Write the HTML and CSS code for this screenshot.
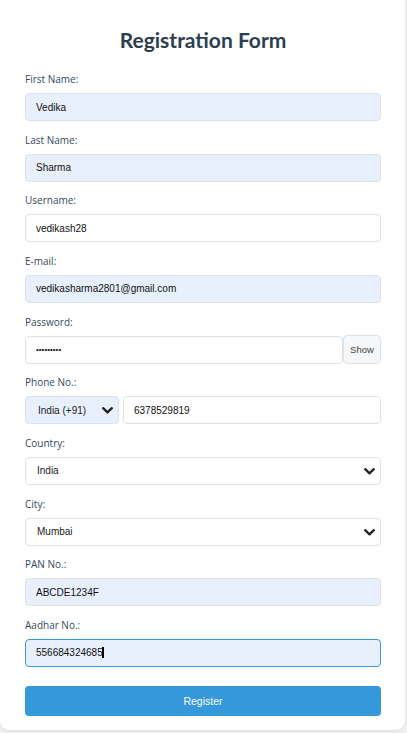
FILE: index.html
```html
<!DOCTYPE html>
<html lang="en">
<head>
<meta charset="utf-8">
<title>Registration Form</title>
<link rel="stylesheet" href="styles.css">
</head>
<body>
<div class="card">
  <h1 class="title">Registration Form</h1>
  <form class="form">
    <div class="group">
      <label class="label">First Name:</label>
      <input class="field filled" type="text" value="Vedika">
    </div>
    <div class="group">
      <label class="label">Last Name:</label>
      <input class="field filled" type="text" value="Sharma">
    </div>
    <div class="group">
      <label class="label">Username:</label>
      <input class="field" type="text" value="vedikash28">
    </div>
    <div class="group">
      <label class="label">E-mail:</label>
      <input class="field filled" type="text" value="vedikasharma2801@gmail.com">
    </div>
    <div class="group">
      <label class="label">Password:</label>
      <div class="row">
        <input class="field pw" type="password" value="123456789">
        <button class="show" type="button">Show</button>
      </div>
    </div>
    <div class="group">
      <label class="label">Phone No.:</label>
      <div class="row phone">
        <div class="select-wrap code">
          <select class="field select filled"><option>India (+91)</option></select>
          <svg class="chev" width="11" height="7" viewBox="0 0 11 7"><path d="M1.2 1.2 L5.5 5.3 L9.8 1.2" fill="none" stroke="#222" stroke-width="2.3" stroke-linecap="round" stroke-linejoin="round"/></svg>
        </div>
        <input class="field num" type="text" value="6378529819">
      </div>
    </div>
    <div class="group">
      <label class="label">Country:</label>
      <div class="select-wrap">
        <select class="field select"><option>India</option></select>
        <svg class="chev" width="11" height="7" viewBox="0 0 11 7"><path d="M1.2 1.2 L5.5 5.3 L9.8 1.2" fill="none" stroke="#222" stroke-width="2.3" stroke-linecap="round" stroke-linejoin="round"/></svg>
      </div>
    </div>
    <div class="group">
      <label class="label">City:</label>
      <div class="select-wrap">
        <select class="field select"><option>Mumbai</option></select>
        <svg class="chev" width="11" height="7" viewBox="0 0 11 7"><path d="M1.2 1.2 L5.5 5.3 L9.8 1.2" fill="none" stroke="#222" stroke-width="2.3" stroke-linecap="round" stroke-linejoin="round"/></svg>
      </div>
    </div>
    <div class="group">
      <label class="label">PAN No.:</label>
      <input class="field filled" type="text" value="ABCDE1234F">
    </div>
    <div class="group">
      <label class="label">Aadhar No.:</label>
      <div class="field filled focused"><span class="val">556684324685</span><span class="caret"></span></div>
    </div>
    <button class="submit" type="button">Register</button>
  </form>
</div>
</body>
</html>
```

FILE: styles.css
```css
html, body {
  margin: 0;
  padding: 0;
}
body {
  background: #f1f1f2;
  width: 407px;
  height: 733px;
  overflow: hidden;
}
.card {
  width: 405px;
  box-sizing: border-box;
  background: #ffffff;
  padding: 25px 24px 14px 25px;
  border-radius: 0 0 9px 9px;
  box-shadow: 0 1px 4px rgba(0, 0, 0, 0.08);
}
.title {
  margin: 0 0 17px 0;
  text-align: center;
  font-family: Lato, "Open Sans", sans-serif;
  font-weight: 700;
  font-size: 21px;
  line-height: 30px;
  color: #2c3e50;
}
.form {
  display: flex;
  flex-direction: column;
}
.group {
  display: flex;
  flex-direction: column;
  margin-bottom: 11.67px;
}
.label {
  display: block;
  font-family: "Open Sans", sans-serif;
  font-size: 10px;
  line-height: 14px;
  color: #34495e;
  margin-bottom: 7px;
}
.field {
  box-sizing: border-box;
  height: 28px;
  width: 100%;
  margin: 0;
  padding: 0 10px;
  border: 1px solid #dde2e7;
  border-radius: 4px;
  background: #ffffff;
  font-family: "Liberation Sans", Arial, sans-serif;
  font-size: 10px;
  color: #111;
  outline: none;
}
.filled {
  background: #e8f0fe;
}
.row {
  display: flex;
  align-items: center;
}
.pw {
  flex: 1;
  width: auto;
  min-width: 0;
  font-size: 8px;
}
.show {
  box-sizing: border-box;
  width: 38px;
  height: 29px;
  margin: -1px 0 0 0;
  padding: 0;
  border: 1px solid #dde2e7;
  border-radius: 4px;
  background: #f6f7f9;
  font-family: "Liberation Sans", Arial, sans-serif;
  font-size: 9.5px;
  color: #444;
}
.phone {
  gap: 4px;
}
.select-wrap {
  position: relative;
  width: 100%;
}
.select-wrap.code {
  width: 94px;
  flex: none;
}
.num {
  flex: 1;
  width: auto;
  min-width: 0;
}
.select {
  appearance: none;
  -webkit-appearance: none;
  padding: 0 10px 0 11px;
  color: #222;
}
.code .select {
  padding-left: 12px;
}
.chev {
  position: absolute;
  right: 6px;
  top: 11px;
  pointer-events: none;
}
.focused {
  display: flex;
  align-items: center;
  border-color: #3d97dc;
}
.caret {
  display: inline-block;
  width: 2px;
  height: 11px;
  background: #000;
  margin-left: -1px;
}
.submit {
  margin-top: 7.33px;
  height: 30px;
  width: 100%;
  border: none;
  border-radius: 4px;
  background: #3498db;
  color: #ffffff;
  font-family: "Liberation Sans", Arial, sans-serif;
  font-size: 10.5px;
}
```
